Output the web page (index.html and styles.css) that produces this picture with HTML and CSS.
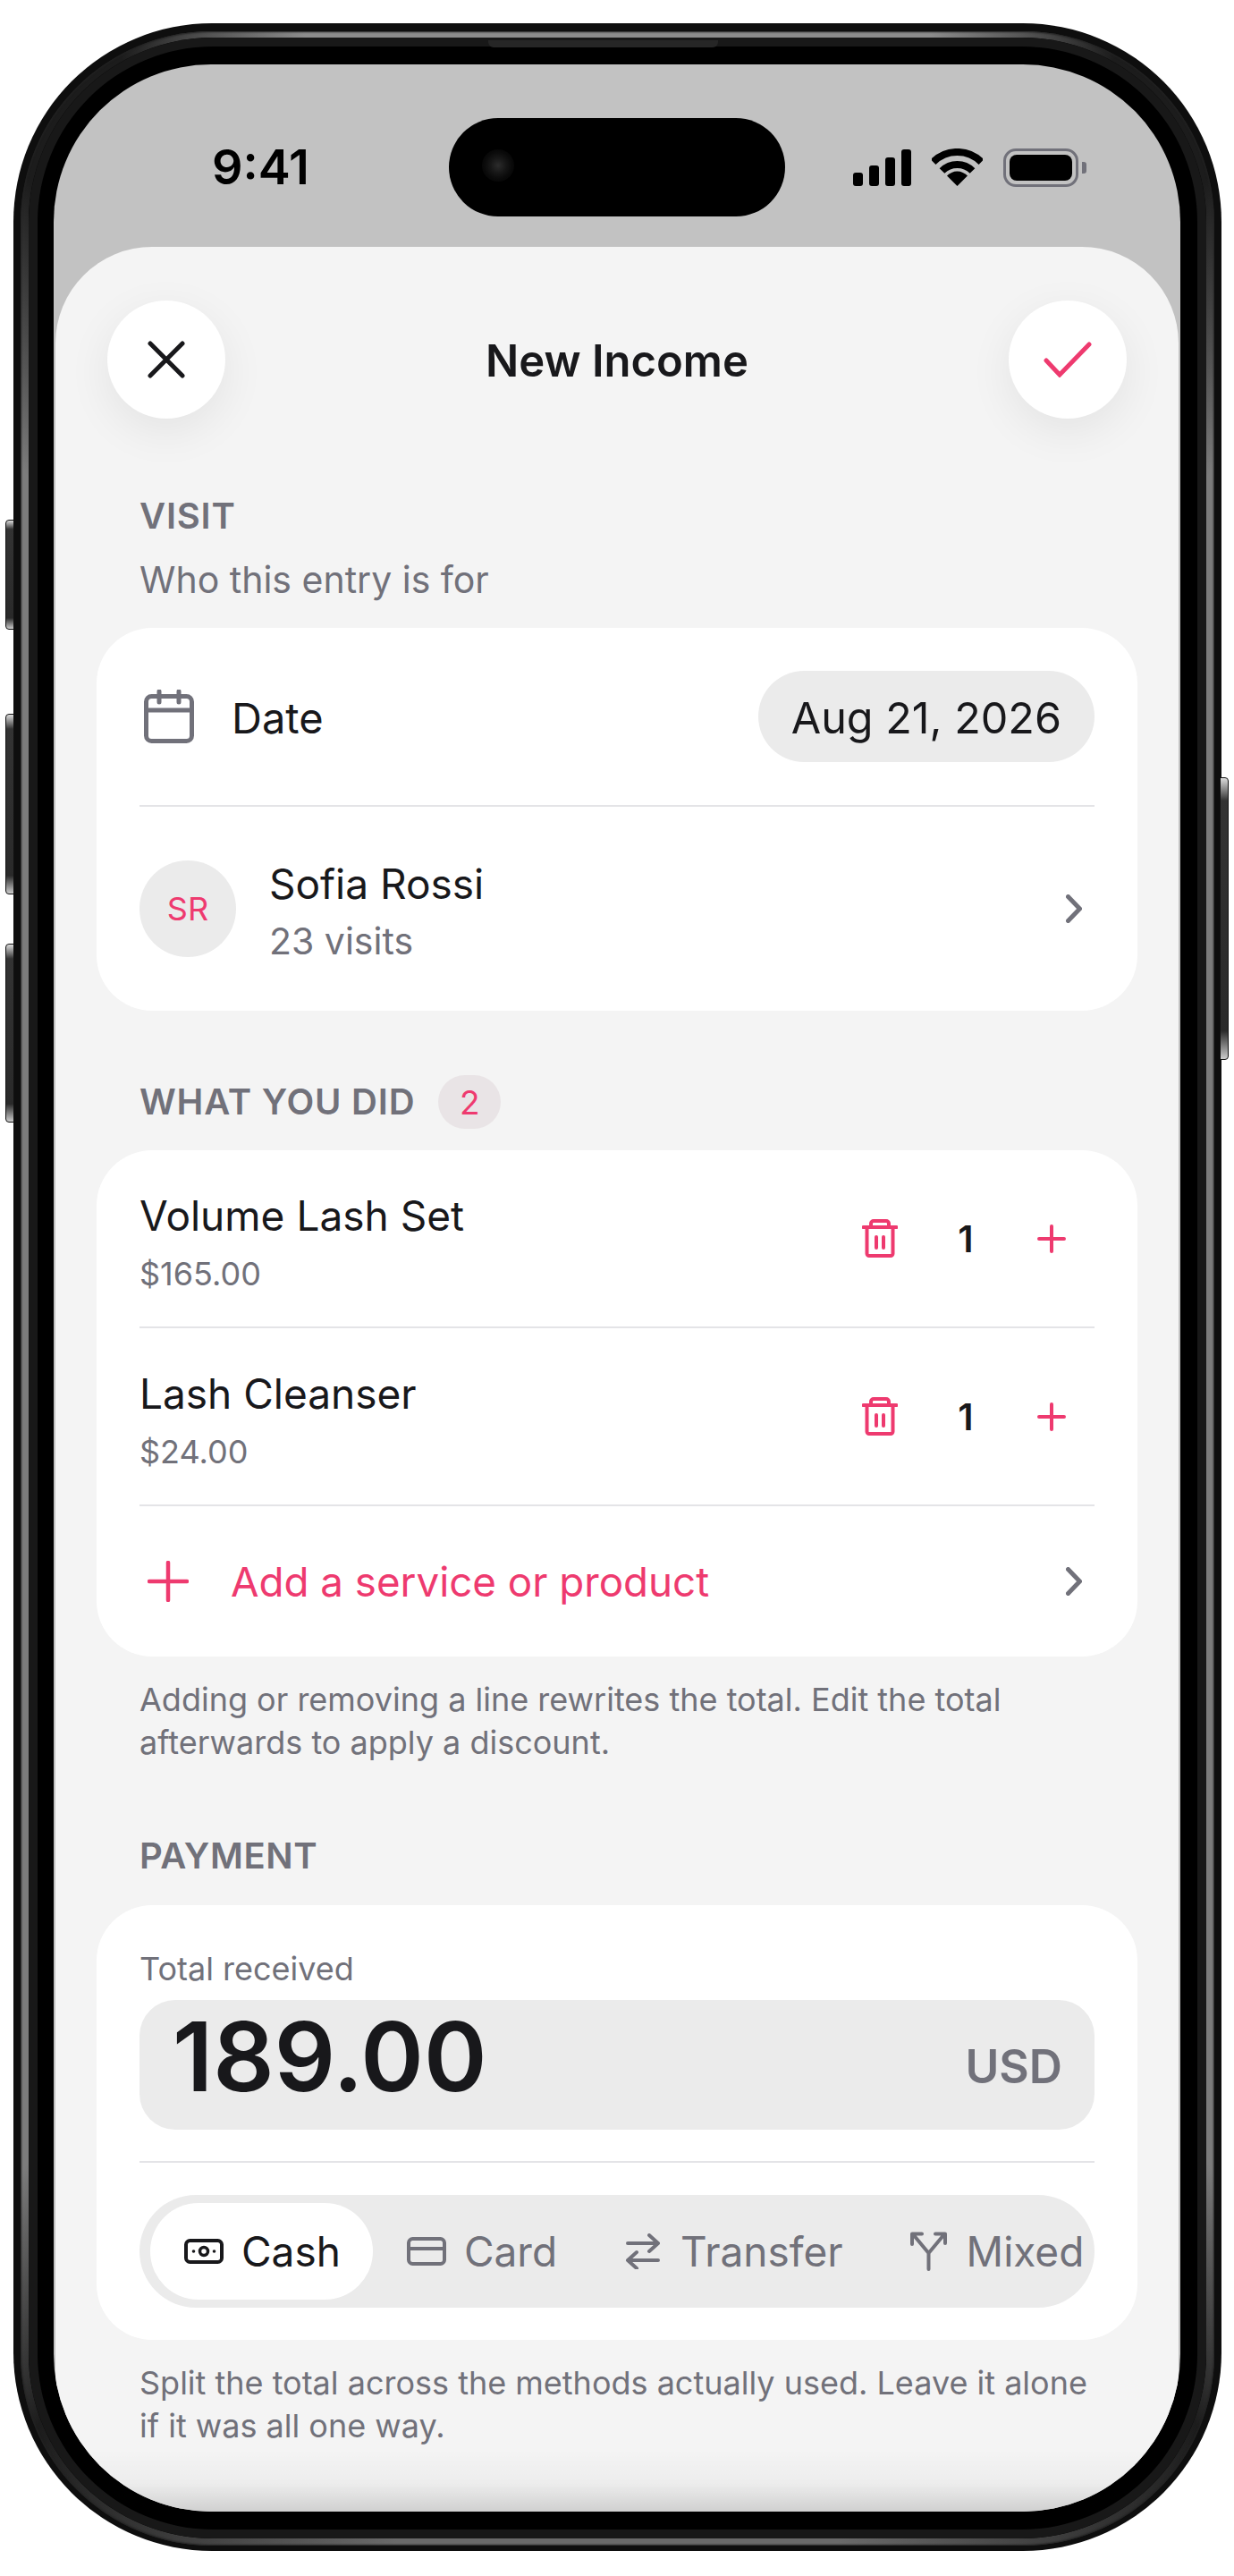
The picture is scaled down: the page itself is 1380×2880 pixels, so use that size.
FILE: index.html
```html
<!DOCTYPE html>
<html>
<head>
    <meta charset="UTF-8">
    <meta name="viewport" content="width=device-width, initial-scale=1.0">
    <title>New Income</title>
    <link rel="stylesheet" href="styles.css">
</head>
<body>
    <div class="phone">
        <span class="side-btn side-mute"></span>
        <span class="side-btn side-up"></span>
        <span class="side-btn side-down"></span>
        <span class="side-btn side-power"></span>
        <div class="band">
            <div class="bezel">
                <span class="speaker"></span>
                <div class="screen">
                    <div class="status-bar">
                        <span class="time">9:41</span>
                        <div class="island"><span class="camera"></span></div>
                        <div class="status-icons">
                            <div class="signal"><i></i><i></i><i></i><i></i></div>
                            <svg class="wifi" viewBox="0 0 57 42" width="57" height="42">
                                <path d="M1.6 15.1A38 38 0 0 1 55.4 15.1" fill="none" stroke="#000" stroke-width="8"/>
                                <path d="M11.5 25A24 24 0 0 1 45.5 25" fill="none" stroke="#000" stroke-width="8"/>
                                <path d="M28.5 42L17 30.5A16 16 0 0 1 40 30.5Z" fill="#000"/>
                            </svg>
                            <div class="battery"><span class="battery-fill"></span></div>
                            <span class="battery-nub"></span>
                        </div>
                    </div>

                    <div class="sheet">
                        <header class="header">
                            <button class="round-btn">
                                <svg viewBox="0 0 42 42" width="42" height="42"><path d="M3 3L39 39M39 3L3 39" fill="none" stroke="#18181b" stroke-width="5" stroke-linecap="round"/></svg>
                            </button>
                            <h1 class="title">New Income</h1>
                            <button class="round-btn">
                                <svg viewBox="0 0 54 40" width="54" height="40"><path d="M3 21L18 37L51 3" fill="none" stroke="#ee3a6f" stroke-width="5" stroke-linecap="round" stroke-linejoin="miter"/></svg>
                            </button>
                        </header>

                        <section class="section section-visit">
                            <h2 class="label">VISIT</h2>
                            <p class="sub">Who this entry is for</p>
                            <div class="card">
                                <div class="row row-date">
                                    <svg class="cal-icon" viewBox="0 0 56 60" width="56" height="60">
                                        <rect x="2.5" y="7.5" width="51" height="50" rx="6" fill="none" stroke="#71717a" stroke-width="5"/>
                                        <path d="M2.5 23H53.5" stroke="#71717a" stroke-width="5"/>
                                        <path d="M17 2V14M39 2V14" stroke="#71717a" stroke-width="5" stroke-linecap="round"/>
                                    </svg>
                                    <span class="row-name">Date</span>
                                    <span class="date-pill">Aug 21, 2026</span>
                                </div>
                                <div class="row row-client">
                                    <span class="avatar">SR</span>
                                    <div class="client-info">
                                        <div class="client-name">Sofia Rossi</div>
                                        <div class="client-meta">23 visits</div>
                                    </div>
                                    <svg class="chevron" viewBox="0 0 18 32" width="18" height="32"><path d="M2.5 2.5L15.5 16L2.5 29.5" fill="none" stroke="#71717a" stroke-width="5" stroke-linecap="round"/></svg>
                                </div>
                            </div>
                        </section>

                        <section class="section section-items">
                            <div class="label-row">
                                <h2 class="label">WHAT YOU DID</h2>
                                <span class="badge">2</span>
                            </div>
                            <div class="card">
                                <div class="row row-line">
                                    <div class="line-info">
                                        <div class="line-name">Volume Lash Set</div>
                                        <div class="line-price">$165.00</div>
                                    </div>
                                    <div class="stepper">
                                        <span class="step-cell">
                                            <svg viewBox="0 0 40 43" width="40" height="43"><path d="M1.5 9H38.5M10 9V5a3 3 0 0 1 3-3H27a3 3 0 0 1 3 3V9M5.5 9V38.5a2.5 2.5 0 0 0 2.5 2.5H32a2.5 2.5 0 0 0 2.5-2.5V9M16 20V32M24 20V32" fill="none" stroke="#ee3a6f" stroke-width="4" stroke-linecap="round"/></svg>
                                        </span>
                                        <span class="step-cell count">1</span>
                                        <span class="step-cell">
                                            <svg viewBox="0 0 32 32" width="32" height="32"><path d="M2 16H30M16 2V30" fill="none" stroke="#ee3a6f" stroke-width="4" stroke-linecap="round"/></svg>
                                        </span>
                                    </div>
                                </div>
                                <div class="row row-line">
                                    <div class="line-info">
                                        <div class="line-name">Lash Cleanser</div>
                                        <div class="line-price">$24.00</div>
                                    </div>
                                    <div class="stepper">
                                        <span class="step-cell">
                                            <svg viewBox="0 0 40 43" width="40" height="43"><path d="M1.5 9H38.5M10 9V5a3 3 0 0 1 3-3H27a3 3 0 0 1 3 3V9M5.5 9V38.5a2.5 2.5 0 0 0 2.5 2.5H32a2.5 2.5 0 0 0 2.5-2.5V9M16 20V32M24 20V32" fill="none" stroke="#ee3a6f" stroke-width="4" stroke-linecap="round"/></svg>
                                        </span>
                                        <span class="step-cell count">1</span>
                                        <span class="step-cell">
                                            <svg viewBox="0 0 32 32" width="32" height="32"><path d="M2 16H30M16 2V30" fill="none" stroke="#ee3a6f" stroke-width="4" stroke-linecap="round"/></svg>
                                        </span>
                                    </div>
                                </div>
                                <div class="row row-add">
                                    <svg class="add-icon" viewBox="0 0 46 46" width="46" height="46"><path d="M2 23H44M23 2V44" fill="none" stroke="#ee3a6f" stroke-width="4.5" stroke-linecap="round"/></svg>
                                    <span class="add-text">Add a service or product</span>
                                    <svg class="chevron" viewBox="0 0 18 32" width="18" height="32"><path d="M2.5 2.5L15.5 16L2.5 29.5" fill="none" stroke="#71717a" stroke-width="5" stroke-linecap="round"/></svg>
                                </div>
                            </div>
                            <p class="note">Adding or removing a line rewrites the total. Edit the total afterwards to apply a discount.</p>
                        </section>

                        <section class="section section-payment">
                            <h2 class="label">PAYMENT</h2>
                            <div class="card card-payment">
                                <div class="total-label">Total received</div>
                                <div class="amount-field">
                                    <span class="amount">189.00</span>
                                    <span class="currency">USD</span>
                                </div>
                                <div class="pay-divider"></div>
                                <div class="methods">
                                    <div class="method active">
                                        <svg viewBox="0 0 44 28" width="44" height="28">
                                            <rect x="2" y="2" width="40" height="24" rx="4.5" fill="none" stroke="#18181b" stroke-width="4"/>
                                            <circle cx="22" cy="14" r="4.5" fill="none" stroke="#18181b" stroke-width="3.5"/>
                                            <circle cx="10.5" cy="14" r="1.8" fill="#18181b"/>
                                            <circle cx="33.5" cy="14" r="1.8" fill="#18181b"/>
                                        </svg>
                                        <span>Cash</span>
                                    </div>
                                    <div class="method">
                                        <svg viewBox="0 0 44 32" width="44" height="32">
                                            <rect x="2" y="2" width="40" height="28" rx="4.5" fill="none" stroke="#71717a" stroke-width="4"/>
                                            <path d="M2 13H42" stroke="#71717a" stroke-width="4"/>
                                        </svg>
                                        <span>Card</span>
                                    </div>
                                    <div class="method">
                                        <svg viewBox="0 0 44 40" width="44" height="40">
                                            <path d="M5 11H39M29 2L39 11L29 20M39 30H5M15 21L5 30L15 39" fill="none" stroke="#71717a" stroke-width="4" stroke-linecap="round" stroke-linejoin="round"/>
                                        </svg>
                                        <span>Transfer</span>
                                    </div>
                                    <div class="method">
                                        <svg viewBox="0 0 44 44" width="44" height="44">
                                            <path d="M21.5 42V24L4 3M21.5 24L39 3M3 14V2.5H14M29 2.5H40V13" fill="none" stroke="#71717a" stroke-width="4" stroke-linecap="round" stroke-linejoin="round"/>
                                        </svg>
                                        <span>Mixed</span>
                                    </div>
                                </div>
                            </div>
                            <p class="note">Split the total across the methods actually used. Leave it alone if it was all one way.</p>
                        </section>
                        <div class="sheet-fade"></div>
                    </div>
                </div>
            </div>
        </div>
    </div>
</body>
</html>
```

FILE: styles.css
```css
:root {
    --pink: #ee3a6f;
    --text: #18181b;
    --muted: #71717a;
    --sheet: #f4f4f4;
    --field: #ebebeb;
    --line: #e4e4e7;
}

* {
    margin: 0;
    padding: 0;
    box-sizing: border-box;
}

body {
    font-family: 'Inter', 'Liberation Sans', sans-serif;
    background: #fff;
    color: var(--text);
    width: 1380px;
    height: 2880px;
    overflow: hidden;
}

/* device frame */
.phone {
    position: relative;
    width: 1351px;
    height: 2826px;
    margin: 26px 0 0 15px;
    padding: 9px 8px 6px 8px;
    background: #0e0e0e;
    border-radius: 222px;
}

.band {
    height: 100%;
    padding: 7px 9px 8px 9px;
    border-radius: 214px;
    background: conic-gradient(
        #8c8c8c 0deg, #8c8c8c 14deg, #1c1c1c 22deg, #1c1c1c 28deg, #7c7c7c 36deg,
        #7c7c7c 146deg, #1c1c1c 153deg, #3a3a3a 160deg, #6a6a6a 170deg,
        #6a6a6a 190deg, #3a3a3a 200deg, #1c1c1c 207deg, #7c7c7c 214deg,
        #7c7c7c 324deg, #1c1c1c 332deg, #1c1c1c 338deg, #8c8c8c 346deg, #8c8c8c 360deg
    );
    box-shadow: inset 0 0 2px 1px #222;
}

.bezel {
    position: relative;
    height: 100%;
    padding: 30px 29px 30px 28px;
    border-radius: 206px;
    background: #000;
    box-shadow: inset 0 0 0 10px #181818;
}

.speaker {
    position: absolute;
    top: 3px;
    left: 514px;
    width: 257px;
    height: 8px;
    background: #262626;
    border-radius: 0 0 6px 6px;
}

.side-btn {
    position: absolute;
    width: 10px;
    background: linear-gradient(#ddd 0, #333 8%, #2a2a2a 90%, #ccc 100%);
    border-radius: 4px 0 0 4px;
    border: 1px solid #111;
}

.side-mute { left: -9px; top: 555px; height: 123px; }
.side-up { left: -9px; top: 772px; height: 202px; }
.side-down { left: -9px; top: 1029px; height: 200px; }
.side-power {
    left: auto;
    right: -8px;
    top: 843px;
    height: 316px;
    border-radius: 0 4px 4px 0;
}

.screen {
    position: relative;
    height: 100%;
    background: #c2c2c2;
    border-radius: 176px;
    overflow: hidden;
    display: flex;
    flex-direction: column;
}

/* status bar */
.status-bar {
    position: relative;
    flex: none;
    height: 204px;
    display: flex;
    align-items: flex-start;
    padding: 93px 105px 0 177px;
    justify-content: space-between;
}

.time {
    font-size: 54px;
    font-weight: 600;
    line-height: 44px;
    color: #000;
}

.island {
    position: absolute;
    top: 60px;
    left: 442px;
    width: 376px;
    height: 110px;
    border-radius: 55px;
    background: #000;
}

.camera {
    position: absolute;
    left: 37px;
    top: 35px;
    width: 36px;
    height: 36px;
    border-radius: 50%;
    background: radial-gradient(circle, #2c2c2c 0, #161616 35%, #0a0a0a 60%, #000 100%);
}

.status-icons {
    display: flex;
    align-items: center;
    height: 44px;
}

.signal {
    display: flex;
    align-items: flex-end;
    gap: 7px;
    height: 41px;
    margin-right: 23px;
}

.signal i {
    display: block;
    width: 11px;
    background: #000;
    border-radius: 3px;
}

.signal i:nth-child(1) { height: 15px; }
.signal i:nth-child(2) { height: 23px; }
.signal i:nth-child(3) { height: 32px; }
.signal i:nth-child(4) { height: 41px; }

.wifi { margin-right: 23px; }

.battery {
    width: 84px;
    height: 43px;
    padding: 4px;
    border: 3px solid var(--muted);
    border-radius: 14px;
}

.battery-fill {
    display: block;
    width: 100%;
    height: 100%;
    background: #000;
    border-radius: 8px;
}

.battery-nub {
    width: 5px;
    height: 13px;
    margin-left: 4px;
    background: var(--muted);
    border-radius: 0 3px 3px 0;
}

/* sheet */
.sheet {
    position: relative;
    flex: 1;
    margin: 0 2px;
    background: var(--sheet);
    border-radius: 108px 108px 0 0;
}

.sheet-fade {
    position: absolute;
    left: 0;
    right: 0;
    bottom: 0;
    height: 70px;
    background: linear-gradient(rgba(0, 0, 0, 0), rgba(0, 0, 0, 0.03) 55%, rgba(0, 0, 0, 0.15));
}

.header {
    display: flex;
    align-items: center;
    justify-content: space-between;
    padding: 60px 58px 0 58px;
}

.round-btn {
    width: 132px;
    height: 132px;
    border: none;
    border-radius: 50%;
    background: #fff;
    box-shadow: 0 14px 50px rgba(0, 0, 0, 0.07);
    display: flex;
    align-items: center;
    justify-content: center;
}

.title {
    padding-top: 3px;
    font-size: 49px;
    font-weight: 600;
    line-height: 60px;
    color: var(--text);
}

.section { padding: 0 46px; }
.section-visit { margin-top: 85px; }
.section-items { margin-top: 72px; }
.section-payment { margin-top: 79px; }

.label {
    padding-left: 48px;
    font-size: 40px;
    font-weight: 600;
    line-height: 48px;
    letter-spacing: 0.8px;
    color: var(--muted);
}

.sub {
    margin: 23px 0 30px;
    padding-left: 48px;
    font-size: 41px;
    line-height: 48px;
    color: var(--muted);
}

.label-row {
    display: flex;
    align-items: center;
    height: 60px;
    margin-bottom: 24px;
}

.badge {
    display: flex;
    align-items: center;
    justify-content: center;
    width: 70px;
    height: 60px;
    margin-left: 26px;
    border-radius: 30px;
    background: #e9e4e6;
    color: var(--pink);
    font-size: 37px;
}

.card {
    padding: 0 48px;
    background: #fff;
    border-radius: 62px;
}

.row { display: flex; align-items: center; }

.row-date {
    height: 200px;
    border-bottom: 2px solid var(--line);
}

.cal-icon { margin: 0 42px 0 5px; }

.row-name { padding-top: 2px; font-size: 47px; flex: 1; }

.date-pill {
    padding: 0 37px;
    height: 102px;
    line-height: 105px;
    border-radius: 51px;
    background: var(--field);
    font-size: 48.5px;
    color: var(--text);
}

.row-client { height: 228px; }

.avatar {
    flex: none;
    width: 108px;
    height: 108px;
    border-radius: 50%;
    background: var(--field);
    color: var(--pink);
    font-size: 36px;
    line-height: 108px;
    text-align: center;
    margin-right: 37px;
}

.client-info { flex: 1; padding-top: 3px; }
.client-name { font-size: 46px; line-height: 60px; margin-bottom: 9px; }
.client-meta { font-size: 41px; line-height: 50px; color: var(--muted); }

.chevron { flex: none; margin-right: 14px; }

.row-line {
    height: 199px;
    border-bottom: 2px solid var(--line);
}

.line-info { flex: 1; padding-top: 6px; }
.line-name { font-size: 46px; line-height: 60px; margin-bottom: 12px; }
.line-price { font-size: 36px; line-height: 46px; color: var(--muted); }

.stepper { display: flex; }

.step-cell {
    width: 96px;
    height: 60px;
    display: flex;
    align-items: center;
    justify-content: center;
}

.count { font-size: 41px; font-weight: 600; }

.row-add { height: 168px; }
.add-icon { margin: 0 47px 0 9px; }
.add-text { flex: 1; font-size: 45.7px; color: var(--pink); }

.note {
    margin-top: 24px;
    padding: 0 48px;
    font-size: 36px;
    line-height: 48px;
    color: var(--muted);
}

.section-payment .label { margin-bottom: 31px; letter-spacing: 0.6px; }

.card-payment { padding-top: 49px; padding-bottom: 36px; }

.total-label {
    font-size: 36px;
    line-height: 44px;
    color: var(--muted);
}

.amount-field {
    display: flex;
    align-items: center;
    justify-content: space-between;
    height: 145px;
    margin-top: 13px;
    padding: 0 36px 0 37px;
    border-radius: 40px;
    background: var(--field);
}

.amount {
    margin-bottom: 20px;
    font-size: 107px;
    font-weight: 600;
    color: var(--text);
}

.currency {
    font-size: 51.5px;
    font-weight: 600;
    color: var(--muted);
    margin-top: 2px;
}

.pay-divider {
    height: 2px;
    margin: 35px 0 36px;
    background: var(--line);
}

.methods {
    display: flex;
    height: 126px;
    padding: 9px 12px;
    border-radius: 63px;
    background: var(--field);
    overflow: hidden;
}

.method {
    flex: none;
    display: flex;
    align-items: center;
    gap: 20px;
    padding: 0 36px 0 38px;
    border-radius: 54px;
    font-size: 46px;
    color: var(--muted);
}

.method svg { flex: none; }

.method.active {
    background: #fff;
    color: var(--text);
}
```
